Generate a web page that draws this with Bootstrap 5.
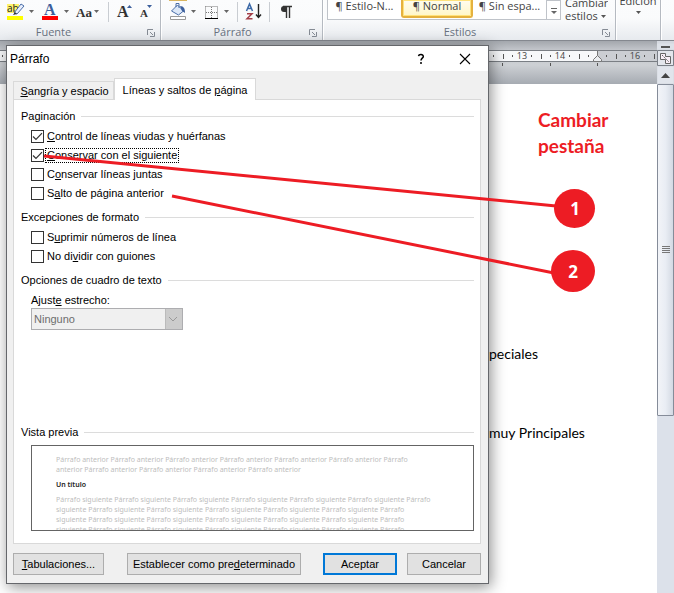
<!DOCTYPE html>
<html lang="es">
<head>
<meta charset="utf-8">
<meta name="viewport" content="width=device-width, initial-scale=1">
<title>Párrafo</title>
<link rel="stylesheet" href="https://cdn.jsdelivr.net/npm/bootstrap@5.3.0/dist/css/bootstrap.min.css">
<style>
  body { font: 11px/16px "Liberation Sans", Arial, sans-serif; color: #000; background: #fff; }
  .app { min-height: 100vh; }
  svg { display: block; flex: none; }
  button { font: inherit; color: inherit; border-radius: 0; }

  /* ribbon */
  .ribbon { height: 41px; background: linear-gradient(#fbfcfd, #fafbfc 45%, #e7eaee); border-bottom: 1px solid #84888f; font: 11px/13px "Open Sans", sans-serif; color: #444; }
  .ribbon-group { position: relative; border-right: 1px solid #b5bac1; box-shadow: 1px 0 #fff; height: 40px; }
  .ribbon-tools { height: 24px; }
  .ribbon-title { color: #69727f; line-height: 14px; padding-right: 53px; padding-top: 1px; }
  .group-font { width: 161px; }
  .group-par { width: 162px; }
  .group-par .ribbon-title { padding-right: 18px; }
  .group-styles { width: 293px; }
  .group-styles .ribbon-title { padding-right: 18px; }
  .group-edit { width: 45px; overflow: hidden; }
  .launcher { position: absolute; right: 5px; bottom: 3px; }
  .tool { background: none; border: 0; padding: 0; }
  .sep { width: 1px; height: 20px; background: #c9cdd2; }
  .gallery { height: 20px; border: 1px solid #bfc3c9; border-top: 0; background: #fff; }
  .style-item { height: 19px; line-height: 12px; width: 73px; padding-bottom: 8px; white-space: nowrap; }
  .style-item.chosen { width: 72px; height: 18px; padding-bottom: 5px; border: 2px solid #e5b13e; border-top: 0; border-radius: 0 0 3px 3px; background: linear-gradient(#fffdf0, #fff6c8); box-shadow: inset 0 0 0 1px #ffe27a; }
  .clip { overflow: hidden; height: 24px; }
  .clip button { display: block; margin: -4px auto 0; }
  .group-edit .clip button { margin-top: -6px; }

  /* document */
  .workspace { background: #fff; }
  .ruler-zone { height: 43px; background: linear-gradient(#a3a7ad, #c3c6cb 9px, #cdd0d4 24px, #a6abb2); padding-top: 9px; }
  .ruler-bar { height: 12px; border-top: 1px solid #7a7e84; border-bottom: 1px solid #7a7e84; background: #f7f8fa; }
  .page-text { font: 14px/18px Lato, sans-serif; padding-left: 489px; }
  .first-line { padding-top: 261px; }
  .second-line { padding-top: 61px; }
  .scroller { width: 17px; background: #dce1ea; }
  .thumb { height: 332px; border: 1px solid #858c99; border-radius: 1px; background: linear-gradient(90deg, #f2f4f8, #e9edf4 50%, #d3d9e3); }

  /* dialog */
  .dlg { position: absolute; top: 45px; left: 6px; right: 185px; border: 1px solid #65676b; background: #f0f0f0; box-shadow: 2px 3px 14px rgba(0,0,0,.45); }
  .dlg-title { height: 25px; background: #fff; padding: 0 17px 0 3px; font-size: 12px; }
  .dlg-body { padding: 7px 7px 8px 6px; }
  .tab-strip { height: 21px; }
  .tab-btn { border: 1px solid #d9d9d9; border-bottom: 0; background: #f0f0f0; height: 18px; width: 101px; line-height: 14px; padding: 1px 0 0 2px; white-space: nowrap; }
  .tab-btn.current { background: #fff; height: 22px; width: 142px; margin-bottom: -1px; position: relative; line-height: 18px; padding: 1px 0 0; }
  .pane { border: 1px solid #d9d9d9; background: #fff; padding: 8px 6px 12px 7px; }
  .group-head { line-height: 16px; gap: 6px; }
  .group-head::after { content: ""; flex: 1; height: 1px; background: #dcdcdc; }
  .group-name { font-size: 11px; margin: 0; float: none; width: auto; line-height: 16px; }
  .checks { padding: 3px 0 6px 10px; }
  .check-row { height: 19px; gap: 1px; }
  .check-row .box { appearance: none; width: 13px; height: 13px; border: 1px solid #333; background: #fff; margin: 0; flex: none; }
  .check-row .box:checked { background: #fff url("data:image/svg+xml,%3Csvg xmlns='http://www.w3.org/2000/svg' viewBox='0 0 11 11'%3E%3Cpath d='M1 5.5l3 3L10 2.2' fill='none' stroke='%23333' stroke-width='1.2'/%3E%3C/svg%3E"); }
  .check-row label { border: 1px dotted transparent; padding: 0 1px; line-height: 13px; }
  .check-row .has-focus { border-color: #000; }
  .fit-select { appearance: none; width: 152px; height: 22px; border: 1px solid #adadb0; border-radius: 0; padding: 0 2px; color: #6d6d6d; opacity: 1; background: #f0f0f0 url("data:image/svg+xml,%3Csvg xmlns='http://www.w3.org/2000/svg' viewBox='0 0 17 20'%3E%3Cpath d='M0 0h17v20H0z' fill='%23ccc'/%3E%3Cpath d='M.5 0v20' stroke='%23bbb'/%3E%3Cpath d='M4 8l4 4 4-4' fill='none' stroke='%23999'/%3E%3C/svg%3E") right center / 17px 20px no-repeat; }
  .wrap-field { padding: 4px 0 0 10px; }
  .preview-head { margin-top: 94px; }
  .preview { margin: 5px 0 0 10px; height: 86px; border: 1px solid #646464; overflow: hidden; padding: 9px 24px 0; font: 7px/10px "Noto Sans", sans-serif; color: #bdbdbd; white-space: nowrap; }
  .preview p { margin: 0 0 5px; }
  .preview .heading { color: #222; font-weight: 600; }
  .push { height: 22px; border: 1px solid #adadad; background: #e1e1e1; padding: 0; line-height: 18px; white-space: nowrap; }
  .push.main { border: 2px solid #0078d7; line-height: 16px; }
  .actions { padding-top: 9px; gap: 10px; }
  .w-tab { width: 91px; } .w-def { width: 174px; margin-left: 13px; } .w-act { width: 74px; }

  /* annotations */
  .notes { position: absolute; left: 0; top: 0; pointer-events: none; }
  .callout { position: absolute; left: 538px; top: 107px; font: 700 19px/26px Lato, sans-serif; color: #ed1c24; margin: 0; }
</style>
<script src="https://cdn.jsdelivr.net/npm/bootstrap@5.3.0/dist/js/bootstrap.bundle.min.js"></script>
</head>
<body>
<div class="app position-relative d-flex flex-column overflow-hidden">

  <header class="ribbon d-flex">
    <section class="ribbon-group group-font flex-shrink-0">
      <div class="ribbon-tools d-flex align-items-center ps-1">
        <button class="tool" aria-label="Resaltado"><svg width="32" height="24" viewBox="0 0 32 24"><path d="M3 4h12v9H3z" fill="#fff36b"/><text x="3" y="12" font-size="10" font-family="Open Sans" fill="#222">ab</text><path d="M10 13l7-9 3 2-7 8z" fill="#e8eefc" stroke="#4a6ea8"/><path d="M9 15l2-3 2 2z" fill="#333"/><path d="M3 16h16v4H3z" fill="#ff0"/><path d="M25 10h5l-2.500 3z" fill="#666"/></svg></button>
        <button class="tool" aria-label="Color de fuente"><svg width="36" height="24" viewBox="0 0 36 24"><text x="8" y="15" font-size="16" font-weight="700" font-family="Liberation Serif" fill="#3c5f9c">A</text><path d="M6 16h16v4H6z" fill="red"/><path d="M28 10h5l-2.500 3z" fill="#666"/></svg></button>
        <button class="tool" aria-label="Mayúsculas"><svg width="28" height="24" viewBox="0 0 28 24"><text x="4" y="17" font-size="13" font-weight="700" font-family="Liberation Serif" fill="#333">Aa</text><path d="M22 10h5l-2.500 3z" fill="#666"/></svg></button>
        <span class="sep ms-2"></span>
        <button class="tool" aria-label="Agrandar fuente"><svg width="28" height="24" viewBox="0 0 28 24"><text x="8" y="17" font-size="16" font-weight="700" font-family="Liberation Serif" fill="#333">A</text><path d="M18 8h5l-2.500-3z" fill="#3c5f9c"/></svg></button>
        <button class="tool" aria-label="Encoger fuente"><svg width="20" height="24" viewBox="0 0 20 24"><text x="3" y="17" font-size="11" font-weight="700" font-family="Liberation Serif" fill="#333">A</text><path d="M10 5h5l-2.500 3z" fill="#3c5f9c"/></svg></button>
      </div>
      <div class="ribbon-title text-center">Fuente</div>
      <svg class="launcher" width="8" height="8" viewBox="0 0 8 8"><path d="M.5 6V.5H6M3 3l3 3M7.500 3v4.500H3" fill="none" stroke="#858b94"/></svg>
    </section>

    <section class="ribbon-group group-par flex-shrink-0">
      <div class="ribbon-tools d-flex align-items-center ps-2">
        <button class="tool" aria-label="Sombreado"><svg width="34" height="24" viewBox="0 0 34 24"><path d="M0 .5h18" stroke="#d9b560"/><path d="M2.500 11l6-6 6 6-5 4z" fill="#dce8f8" stroke="#4a6ea8"/><path d="M7 7V3.500h3V8" fill="none" stroke="#4a6ea8"/><path d="M11 6c4 0 5 3 5 7l-3-2z" fill="#3c5f9c"/><path d="M1.500 16.500h15v3h-15z" fill="#fff" stroke="#999"/><path d="M22 10h5l-2.500 3z" fill="#666"/></svg></button>
        <button class="tool" aria-label="Bordes"><svg width="34" height="24" viewBox="0 0 34 24"><path d="M2.500 6.500h12v11M2.500 6.500v11M8.500 7v11M3 12.500h12" fill="none" stroke="#777" stroke-dasharray="1 1"/><path d="M2 18.500h13" stroke="#000"/><path d="M21 10h5l-2.500 3z" fill="#666"/></svg></button>
        <span class="sep"></span>
        <button class="tool" aria-label="Ordenar"><svg width="31" height="24" viewBox="0 0 31 24"><path d="M8.500 11l3-7 3 7M9.500 8.500h4" fill="none" stroke="#3c6aa8" stroke-width="1.500"/><path d="M9 13.700h5l-5 5h5.500" fill="none" stroke="#a3404a" stroke-width="1.500"/><path d="M20.500 4v13M18 14.500l2.500 3 2.500-3" fill="none" stroke="#222" stroke-width="1.400"/></svg></button>
        <span class="sep"></span>
        <button class="tool" aria-label="Marcas de párrafo"><svg width="24" height="24" viewBox="0 0 24 24"><path d="M16.500 18V6.500M19.500 18V6.500M13 6.500h9" stroke="#333" stroke-width="1.400" fill="none"/><path d="M16 6h-2a3 3 0 0 0 0 6h2z" fill="#333"/></svg></button>
      </div>
      <div class="ribbon-title text-center">Párrafo</div>
      <svg class="launcher" width="8" height="8" viewBox="0 0 8 8"><path d="M.5 6V.5H6M3 3l3 3M7.500 3v4.500H3" fill="none" stroke="#858b94"/></svg>
    </section>

    <section class="ribbon-group group-styles flex-shrink-0">
      <div class="ribbon-tools d-flex ps-1">
        <div class="gallery d-flex ms-0">
          <button class="tool style-item">¶ Estilo-N...</button>
          <button class="tool style-item chosen">¶ Normal</button>
          <button class="tool style-item">¶ Sin espa...</button>
          <svg width="14" height="19" viewBox="0 0 14 19"><path d="M.5 0v19M0 .5h14" stroke="#bfc3c9"/><path d="M5 8.500h6" stroke="#666"/><path d="M5 11h6l-3 3z" fill="#666"/></svg>
        </div>
        <div class="clip ms-1"><button class="tool text-start">Cambiar<br>estilos <svg class="d-inline-block" width="5" height="4" viewBox="0 0 5 4"><path d="M0 0h5L2.500 3z" fill="#555"/></svg></button></div>
      </div>
      <div class="ribbon-title text-center">Estilos</div>
      <svg class="launcher" width="8" height="8" viewBox="0 0 8 8"><path d="M.5 6V.5H6M3 3l3 3M7.500 3v4.500H3" fill="none" stroke="#858b94"/></svg>
    </section>

    <section class="ribbon-group group-edit flex-shrink-0">
      <div class="clip text-center"><button class="tool">Edición<svg class="mx-auto mt-1" width="5" height="4" viewBox="0 0 5 4"><path d="M0 0h5L2.500 3z" fill="#555"/></svg></button></div>
    </section>
  </header>

  <main class="workspace d-flex flex-grow-1">
    <div class="flex-grow-1">
      <div class="ruler-zone">
        <div class="ruler-bar d-flex">
        <svg width="657" height="24" viewBox="0 0 657 24">
          <path d="M597 0h60v10h-60z" fill="#cbced3"/>
          <g stroke="#555"><path d="M2.500 4v2M493.500 4v2M503.500 3v5M512.500 4v2M531.500 4v2M541.500 3v5M550.500 4v2M569.500 4v2M579.500 3v5M588.500 4v2M606.500 4v2M616.500 3v5M625.500 4v2M644.500 4v2M654.500 3v5M502.500 12v3M550.500 12v3M597.500 12v3"/></g>
          <g font-family="Open Sans, sans-serif" font-size="9" fill="#444" text-anchor="middle"><text x="522" y="8">13</text><text x="560" y="8">14</text><text x="635" y="8">16</text></g>
          <path d="M597.500 0v6" stroke="#777"/><path d="M593.500 10.500v-2l4-4 4 4v2z" fill="#eceef1" stroke="#777"/>
        </svg>
        </div>
      </div>
      <div class="page-text first-line">peciales</div>
      <div class="page-text second-line">muy Principales</div>
    </div>
    <div class="scroller flex-shrink-0">
      <svg width="17" height="43" viewBox="0 0 17 43"><path d="M0 0h17v43H0z" fill="#d5d9e0"/><path d="M0 2.500h17v6H0z" fill="#dde1e8"/><path d="M4 6h9" stroke="#555" stroke-width="2"/><path d="M.5 9.500h16v15H.5z" fill="#e3e6ec" stroke="#7b8088"/><path d="M3.500 12.500h5v3h5v7h-5v-4h-5z" fill="#f8eef6" stroke="#666"/><path d="M5 14l7 7" stroke="#666" stroke-dasharray="2 1"/><path d="M.5 25.500h16v17H.5z" fill="#e1e5ec"/><path d="M4 37l4.500-5 4.500 5z" fill="#444"/></svg>
      <div class="thumb d-flex align-items-center justify-content-center"><svg width="8" height="8" viewBox="0 0 8 8"><path d="M0 .5h8M0 2.500h8M0 4.500h8M0 6.500h8" stroke="#777"/></svg></div>
    </div>
  </main>

  <form class="dlg" role="dialog" aria-labelledby="dlgTitle">
    <div class="dlg-title d-flex align-items-center">
      <span id="dlgTitle" class="me-auto">Párrafo</span>
      <button type="button" class="tool me-4" aria-label="Ayuda"><svg width="12" height="12" viewBox="0 0 12 12"><path d="M3.500 3.200C3.800 1 8.500 1 8.300 3.600 8.200 5.200 6 5.300 6 7.500M6 9v2" fill="none" stroke="#000" stroke-width="1.500"/></svg></button>
      <button type="button" class="tool ms-2" aria-label="Cerrar"><svg width="12" height="12" viewBox="0 0 12 12"><path d="M1 1l10 10M11 1L1 11" stroke="#000" stroke-width="1.100"/></svg></button>
    </div>
    <div class="dlg-body">
      <div class="tab-strip d-flex align-items-end ps-0" role="tablist">
        <button type="button" class="tab-btn" role="tab"><u>S</u>angría y espacio</button>
        <button type="button" class="tab-btn current" role="tab" aria-selected="true">Líneas y saltos de <u>p</u>ágina</button>
      </div>
      <div class="pane">
        <fieldset>
          <div class="group-head d-flex align-items-center"><legend class="group-name">Paginación</legend></div>
          <div class="checks">
            <div class="check-row d-flex align-items-center"><input class="box" type="checkbox" id="c1" checked><label for="c1"><u>C</u>ontrol de líneas viudas y huérfanas</label></div>
            <div class="check-row d-flex align-items-center"><input class="box" type="checkbox" id="c2" checked><label for="c2" class="has-focus"><u>C</u>onservar con el siguiente</label></div>
            <div class="check-row d-flex align-items-center"><input class="box" type="checkbox" id="c3"><label for="c3">C<u>o</u>nservar líneas juntas</label></div>
            <div class="check-row d-flex align-items-center"><input class="box" type="checkbox" id="c4"><label for="c4">S<u>a</u>lto de página anterior</label></div>
          </div>
        </fieldset>
        <fieldset>
          <div class="group-head d-flex align-items-center"><legend class="group-name">Excepciones de formato</legend></div>
          <div class="checks">
            <div class="check-row d-flex align-items-center"><input class="box" type="checkbox" id="c5"><label for="c5">S<u>u</u>primir números de línea</label></div>
            <div class="check-row d-flex align-items-center"><input class="box" type="checkbox" id="c6"><label for="c6">No di<u>v</u>idir con guiones</label></div>
          </div>
        </fieldset>
        <fieldset>
          <div class="group-head d-flex align-items-center"><legend class="group-name">Opciones de cuadro de texto</legend></div>
          <div class="wrap-field">
            <label class="d-block" for="fit">Ajust<u>e</u> estrecho:</label>
            <select id="fit" class="fit-select" disabled><option>Ninguno</option></select>
          </div>
        </fieldset>
        <div class="group-head preview-head d-flex align-items-center"><span class="group-name">Vista previa</span></div>
        <div class="preview">
          <p>Párrafo anterior Párrafo anterior Párrafo anterior Párrafo anterior Párrafo anterior Párrafo anterior Párrafo<br>anterior Párrafo anterior Párrafo anterior Párrafo anterior Párrafo anterior</p>
          <p class="heading">Un título</p>
          <p>Párrafo siguiente Párrafo siguiente Párrafo siguiente Párrafo siguiente Párrafo siguiente Párrafo siguiente Párrafo<br>siguiente Párrafo siguiente Párrafo siguiente Párrafo siguiente Párrafo siguiente Párrafo siguiente Párrafo<br>siguiente Párrafo siguiente Párrafo siguiente Párrafo siguiente Párrafo siguiente Párrafo siguiente Párrafo<br>siguiente Párrafo siguiente Párrafo siguiente Párrafo siguiente Párrafo siguiente Párrafo siguiente Párrafo</p>
        </div>
      </div>
      <div class="actions d-flex">
        <button type="button" class="push w-tab"><u>T</u>abulaciones...</button>
        <button type="button" class="push w-def">Establecer como pre<u>d</u>eterminado</button>
        <button type="submit" class="push main w-act ms-auto">Aceptar</button>
        <button type="button" class="push w-act">Cancelar</button>
      </div>
    </div>
  </form>

  <p class="callout">Cambiar<br>pestaña</p>
  <svg class="notes" width="674" height="593" viewBox="0 0 674 593">
    <g stroke="#ed1c24" stroke-width="3"><path d="M44 156L556 206"/><path d="M172 196L554 273"/></g>
    <ellipse cx="574.500" cy="208.500" rx="20.500" ry="19.500" fill="#ed1c24"/><ellipse cx="573" cy="271" rx="22" ry="21" fill="#ed1c24"/>
    <g font-family="Open Sans, sans-serif" font-weight="700" font-size="17" fill="#fff" text-anchor="middle"><text x="575" y="215">1</text><text x="573" y="278">2</text></g>
  </svg>
</div>
</body>
</html>
